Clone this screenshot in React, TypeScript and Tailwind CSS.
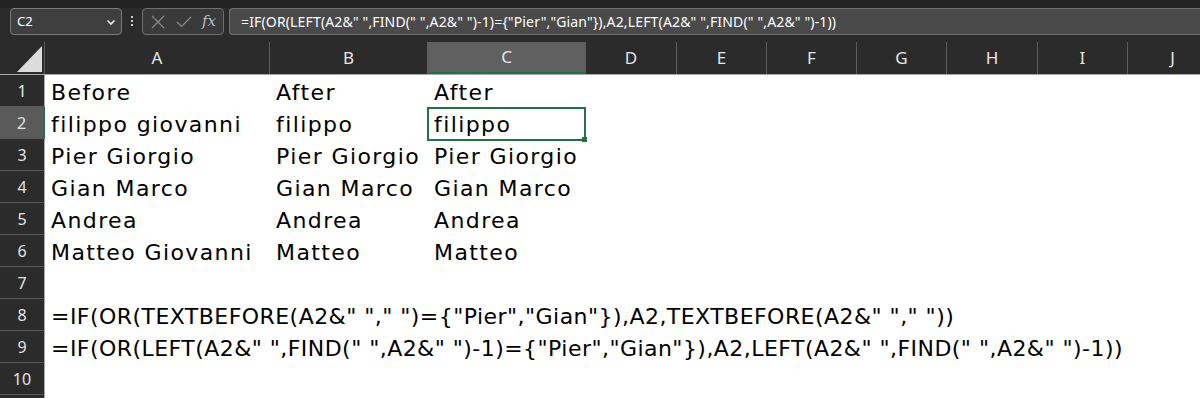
import React from "react";

const cols = [
  { id: "A", w: "w-[225px]" },
  { id: "B", w: "w-[158px]" },
  { id: "C", w: "w-[158px]" },
  { id: "D", w: "w-[91px]" },
  { id: "E", w: "w-[90px]" },
  { id: "F", w: "w-[90px]" },
  { id: "G", w: "w-[90px]" },
  { id: "H", w: "w-[91px]" },
  { id: "I", w: "w-[90px]" },
  { id: "J", w: "w-[90px]" },
];

const f8 = '=IF(OR(TEXTBEFORE(A2&" "," ")={"Pier","Gian"}),A2,TEXTBEFORE(A2&" "," "))';
const f9 = '=IF(OR(LEFT(A2&" ",FIND(" ",A2&" ")-1)={"Pier","Gian"}),A2,LEFT(A2&" ",FIND(" ",A2&" ")-1))';

const rows: string[][] = [
  ["Before", "After", "After"],
  ["filippo giovanni", "filippo", "filippo"],
  ["Pier Giorgio", "Pier Giorgio", "Pier Giorgio"],
  ["Gian Marco", "Gian Marco", "Gian Marco"],
  ["Andrea", "Andrea", "Andrea"],
  ["Matteo Giovanni", "Matteo", "Matteo"],
  [],
  [f8],
  [f9],
  [],
];

function FormulaBar() {
  return (
    <div className="flex h-[27px] items-start bg-[#2b2b2b]">
      <div className="ml-[10px] flex h-[27px] w-[112px] shrink-0 items-center justify-between rounded-[4px] border border-[#7a7a7a] bg-[#3f3f3f] pl-[6px] pr-[5px] text-[13px] text-white">
        <span>C2</span>
        <svg width="10" height="10" viewBox="0 0 10 10">
          <path d="M1.5 3.5 L5 7 L8.5 3.5" fill="none" stroke="#f0f0f0" strokeWidth="1.6" />
        </svg>
      </div>
      <div className="mt-[8px] ml-[9px] flex shrink-0 flex-col gap-[2px]">
        <span className="h-[2px] w-[2px] bg-[#cfcfcf]" />
        <span className="h-[2px] w-[2px] bg-[#cfcfcf]" />
        <span className="h-[2px] w-[2px] bg-[#cfcfcf]" />
      </div>
      <div className="ml-[9px] flex h-[27px] w-[82px] shrink-0 items-center rounded-[4px] border border-[#6e6e6e] bg-[#3a3a3a] pl-[8px]">
        <svg width="14" height="14" viewBox="0 0 14 14">
          <path d="M1 1 L13 13 M13 1 L1 13" stroke="#8c8c8c" strokeWidth="1.1" />
        </svg>
        <svg className="ml-[11px]" width="16" height="12" viewBox="0 0 16 12">
          <path d="M1 6 L5.5 10.5 L15 1" fill="none" stroke="#8c8c8c" strokeWidth="1.1" />
        </svg>
        <span className="ml-[10px] font-['DejaVu_Serif',serif] text-[15px] italic leading-none text-[#bdbdbd]">fx</span>
      </div>
      <div className="ml-[5px] flex h-[27px] flex-1 items-center whitespace-nowrap rounded-l-[4px] border border-r-0 border-[#707070] bg-[#4a4a4a] pl-[11px] text-[14px] tracking-[0.15px] text-white">
        {f9}
      </div>
    </div>
  );
}

function Header() {
  return (
    <div className="flex h-[40px] border-b border-[#a8a8a8] bg-[#2b2b2b]">
      <div className="relative mt-[7px] w-[45px] shrink-0 border-r border-[#5c5c5c]">
        <svg className="absolute left-[17px] top-[4px]" width="26" height="26" viewBox="0 0 26 26">
          <polygon points="0,26 25,26 25,0" fill="#dcdcdc" />
        </svg>
      </div>
      {cols.map((c) => (
        <div
          key={c.id}
          className={`${c.w} mt-[7px] flex shrink-0 items-center justify-center border-r border-[#5c5c5c] text-[17px] text-[#e6e6e6] ${
            c.id === "C" ? "border-b-2 border-b-[#217346] bg-[#606060]" : ""
          }`}
        >
          {c.id}
        </div>
      ))}
    </div>
  );
}

export default function App() {
  return (
    <div className="h-[398px] w-[1200px] overflow-hidden bg-white font-['Noto_Sans',sans-serif]">
      <div className="h-2 bg-[#232323]" />
      <FormulaBar />
      <Header />
      {rows.map((r, i) => (
        <div key={i} className="flex h-[32px]">
          <div
            className={`flex w-[45px] shrink-0 items-center justify-center border-b border-[#5a5a5a] text-[16px] text-[#e3e3e3] ${
              i === 1 ? "border-r-2 border-r-[#217346] bg-[#5a5a5a]" : "border-r border-r-[#a8a8a8] bg-[#2b2b2b]"
            }`}
          >
            {i + 1}
          </div>
          {cols.slice(0, 3).map((c, j) => (
            <div key={c.id} className={`${c.w} relative shrink-0 whitespace-nowrap`}>
              {i === 1 && j === 2 && (
                <div className="absolute -left-[1px] top-0 h-[34px] w-[159px] border-2 border-[#217346]">
                  <span className="absolute -right-[3px] -bottom-[3px] h-[5px] w-[5px] bg-[#217346]" />
                </div>
              )}
              <span
                className={`absolute left-[6px] top-[1px] font-['DejaVu_Sans',sans-serif] text-[22px] text-black ${
                  i >= 7 ? "tracking-[0.45px]" : "tracking-[1.4px]"
                }`}
              >
                {r[j] ?? ""}
              </span>
            </div>
          ))}
        </div>
      ))}
      <div className="flex h-[10px]">
        <div className="w-[45px] shrink-0 border-r border-[#a8a8a8] bg-[#2b2b2b]" />
      </div>
    </div>
  );
}
